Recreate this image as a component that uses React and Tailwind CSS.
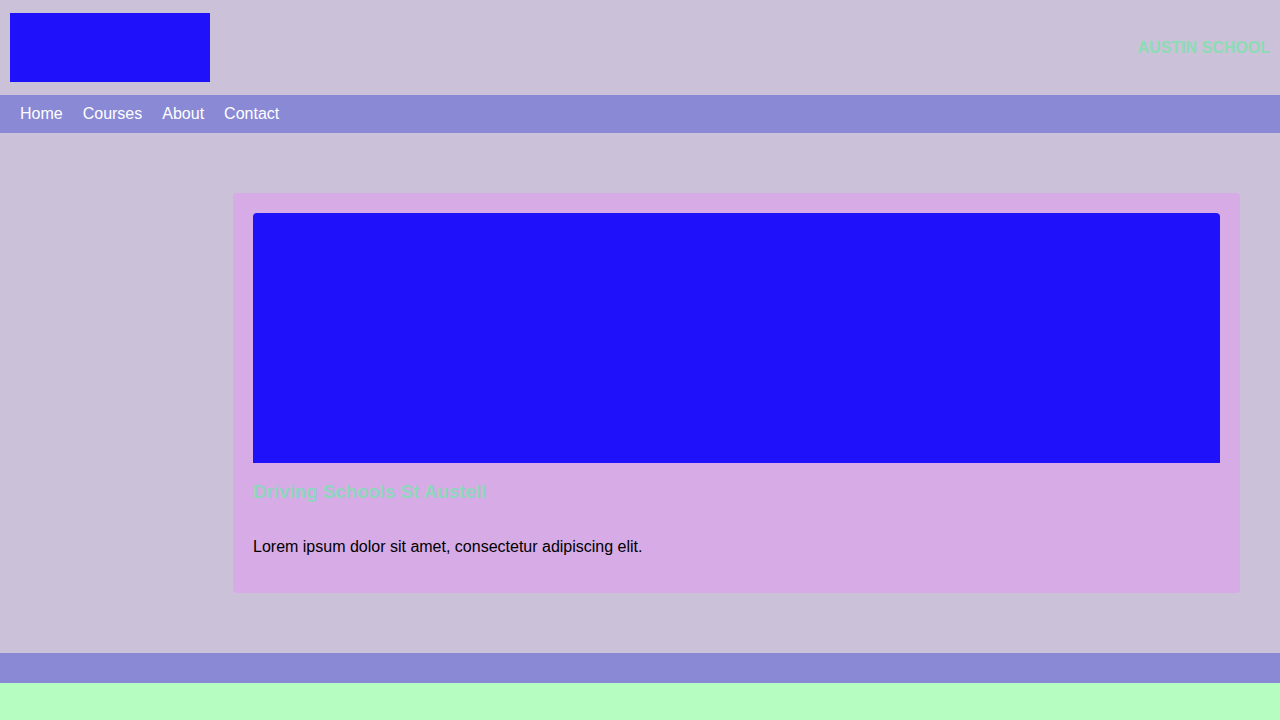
export default function App() {
  return (
    <div
      className="min-h-screen bg-[#b5fdc0] text-black"
      style={{ fontFamily: '"Liberation Sans", Arial, sans-serif' }}
    >
      <header className="flex h-[95px] items-center justify-between bg-[#cbc1d9] px-[10px]">
        <div className="h-[69px] w-[200px] bg-[#1f12fa]" />
        <span className="text-[16px] font-bold text-[#8cdcb4]">AUSTIN SCHOOL</span>
      </header>

      <nav className="flex h-[38px] items-center gap-[20px] bg-[#8989d6] px-[20px] text-base text-white">
        <a href="#">Home</a>
        <a href="#">Courses</a>
        <a href="#">About</a>
        <a href="#">Contact</a>
      </nav>

      <main className="flex bg-[#cbc1d9] px-[40px] py-[60px]">
        <aside className="w-[193px] shrink-0" />
        <article className="flex-1 rounded-[4px] bg-[#d6abe6] px-[20px] pt-[20px] pb-[37px]">
          <div className="h-[250px] rounded-t-[4px] bg-[#1f12fa]" />
          <h3 className="mt-[18px] text-[18.72px] leading-[22px] font-bold text-[#8fd6bd]">
            Driving Schools St Austell
          </h3>
          <p className="mt-[35px] text-base leading-[18px]">
            Lorem ipsum dolor sit amet, consectetur adipiscing elit.
          </p>
        </article>
      </main>

      <footer className="h-[30px] bg-[#8989d6]" />
    </div>
  );
}
